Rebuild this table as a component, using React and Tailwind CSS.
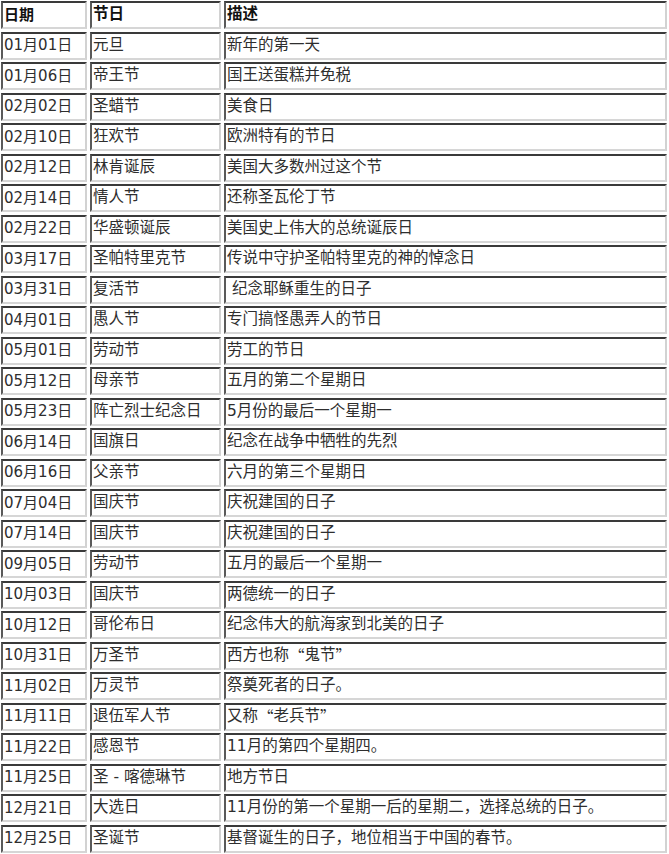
const rows = [
  ["01月01日", "元旦", "新年的第一天"],
  ["01月06日", "帝王节", "国王送蛋糕并免税"],
  ["02月02日", "圣蜡节", "美食日"],
  ["02月10日", "狂欢节", "欧洲特有的节日"],
  ["02月12日", "林肯诞辰", "美国大多数州过这个节"],
  ["02月14日", "情人节", "还称圣瓦伦丁节"],
  ["02月22日", "华盛顿诞辰", "美国史上伟大的总统诞辰日"],
  ["03月17日", "圣帕特里克节", "传说中守护圣帕特里克的神的悼念日"],
  ["03月31日", "复活节", " 纪念耶稣重生的日子"],
  ["04月01日", "愚人节", "专门搞怪愚弄人的节日"],
  ["05月01日", "劳动节", "劳工的节日"],
  ["05月12日", "母亲节", "五月的第二个星期日"],
  ["05月23日", "阵亡烈士纪念日", "5月份的最后一个星期一"],
  ["06月14日", "国旗日", "纪念在战争中牺牲的先烈"],
  ["06月16日", "父亲节", "六月的第三个星期日"],
  ["07月04日", "国庆节", "庆祝建国的日子"],
  ["07月14日", "国庆节", "庆祝建国的日子"],
  ["09月05日", "劳动节", "五月的最后一个星期一"],
  ["10月03日", "国庆节", "两德统一的日子"],
  ["10月12日", "哥伦布日", "纪念伟大的航海家到北美的日子"],
  ["10月31日", "万圣节", <>西方也称<Q>“</Q>鬼节<Q>”</Q></>],
  ["11月02日", "万灵节", "祭奠死者的日子。"],
  ["11月11日", "退伍军人节", <>又称<Q>“</Q>老兵节<Q>”</Q></>],
  ["11月22日", "感恩节", "11月的第四个星期四。"],
  ["11月25日", "圣 - 喀德琳节", "地方节日"],
  ["12月21日", "大选日", "11月份的第一个星期一后的星期二，选择总统的日子。"],
  ["12月25日", "圣诞节", "基督诞生的日子，地位相当于中国的春节。"],
];

// full-width curly quotes come from the CJK font
function Q({ children }) {
  return <span className="font-['Noto_Sans_CJK_SC',sans-serif]">{children}</span>;
}

function Cell({ children, bold, small }) {
  return (
    <div
      className={`flex items-center whitespace-pre border-2 border-t-[#3a3a3a] border-l-[#5a5a5a] border-b-[#d6d6d6] border-r-[#d2d2d2] bg-white pl-[1px] ${
        small ? "text-[15px]" : "text-[15.5px]"
      } ${bold ? "font-bold text-[#111]" : "text-[#2e2e2e]"}`}
    >
      {children}
    </div>
  );
}

export default function App() {
  return (
    <div className="h-[854px] w-[669px] overflow-hidden bg-white pl-[1px] pt-[1px] font-['DejaVu_Sans','Noto_Sans_CJK_SC',sans-serif]">
      <div className="grid grid-cols-[86px_131px_443px] auto-rows-[28px] gap-x-[3px] gap-y-[2.5px]">
        {/* header */}
        <Cell bold small>日期</Cell>
        <Cell bold>节日</Cell>
        <Cell bold>描述</Cell>

        {rows.map((r, i) => (
          <>
            <Cell key={`d${i}`} small>{r[0]}</Cell>
            <Cell key={`n${i}`}>{r[1]}</Cell>
            <Cell key={`t${i}`}>{r[2]}</Cell>
          </>
        ))}
      </div>
    </div>
  );
}
